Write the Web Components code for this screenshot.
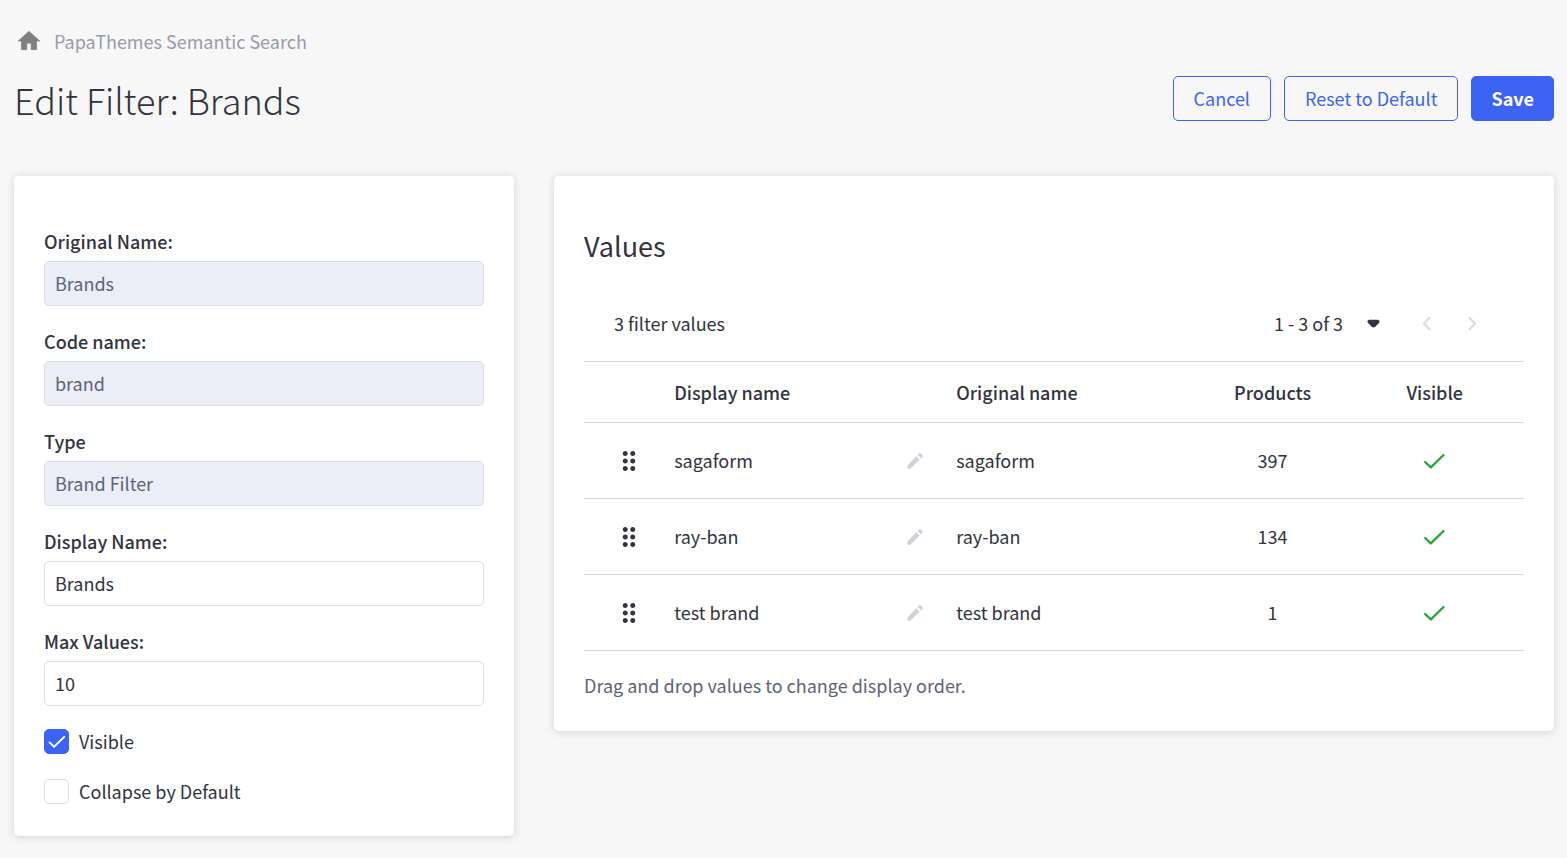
<!DOCTYPE html>
<html lang="en">
<head>
  <meta charset="utf-8">
  <meta name="viewport" content="width=device-width, initial-scale=1">
  <title>Edit Filter: Brands</title>
  <style>
    body {
      margin: 0;
      background-color: #f7f7f7;
      color: #313440;
      font-family: "Source Sans Pro", "Noto Sans CJK SC", "Noto Sans", sans-serif;
      font-size: 18px;
      line-height: 25px;
      --primary: #3c64f4;
      --success: #20a839;
      --border: #d9dce9;
      --muted: #5e637a;
    }
  </style>
</head>
<body>

<filter-page></filter-page>

<script>

  /**
   *
   * AppIcon
   *  - inline icons, colored by the current text color
   *
   */
  class AppIcon extends HTMLElement {

    static version = '0.0.1';

    /**
     * @type {Object<string, string>}
     */
    static paths = {
      home: '<path fill="currentColor" stroke="currentColor" stroke-width=".6" stroke-linejoin="round" d="M10 20v-6h4v6h5v-8h3L12 3 2 12h3v8z"/>',
      drag: '<path fill="currentColor" d="M11 18c0 1.100-.900 2-2 2s-2-.900-2-2 .900-2 2-2 2 .900 2 2zm-2-8c-1.100 0-2 .900-2 2s.900 2 2 2 2-.900 2-2-.900-2-2-2zm0-6c-1.100 0-2 .900-2 2s.900 2 2 2 2-.900 2-2-.900-2-2-2zm6 4c1.100 0 2-.900 2-2s-.900-2-2-2-2 .900-2 2 .900 2 2 2zm0 2c-1.100 0-2 .900-2 2s.900 2 2 2 2-.900 2-2-.900-2-2-2zm0 6c-1.100 0-2 .900-2 2s.900 2 2 2 2-.900 2-2-.900-2-2-2z"/>',
      edit: '<path fill="currentColor" d="M3.600 17.300V20c0 .300.200.500.500.500h2.700c.200 0 .300-.100.400-.200L17 10.500 13.400 6.900 3.700 16.900c-.100.100-.100.200-.100.400zM20.300 7.200c.400-.400.400-1 0-1.400l-2.200-2.200c-.400-.400-1-.400-1.400 0L14.900 5.400 18.500 9z"/>',
      check: '<path fill="none" stroke="currentColor" stroke-width="2.200" stroke-linecap="round" stroke-linejoin="round" d="M3 12.500L8.500 17.700 20.700 5.800"/>',
      down: '<path fill="currentColor" d="M8.700 8.500h6.600c2.300 0 3.300 1.700 1.700 3.300l-3.300 3.200c-.900.900-2.500.900-3.400 0L7 11.800C5.400 10.200 6.400 8.500 8.700 8.500z"/>',
      previous: '<path fill="none" stroke="currentColor" stroke-width="2" stroke-linecap="round" stroke-linejoin="round" d="M15 6.500L9.500 12l5.500 5.500"/>',
      next: '<path fill="none" stroke="currentColor" stroke-width="2" stroke-linecap="round" stroke-linejoin="round" d="M10 6.500L15.500 12l-5.500 5.500"/>'
    };

    connectedCallback() {
      const shadowRoot = this.attachShadow({mode: 'open'});
      shadowRoot.innerHTML = `
        <style>
          :host{
            display: inline-flex;
            width: 25px;
            height: 25px;
          }
          svg{
            width: 100%;
            height: 100%;
          }
        </style>
        <svg viewBox="0 0 24 24" aria-hidden="true">${ AppIcon.paths[this.getAttribute('name')] }</svg>
      `;
    }

  }

  customElements.define('app-icon', AppIcon);

  /**
   *
   * AppButton
   *  - outlined button, or filled with the primary attribute
   *
   */
  class AppButton extends HTMLElement {

    connectedCallback() {
      const shadowRoot = this.attachShadow({mode: 'open'});
      shadowRoot.innerHTML = `
        <style>
          :host{
            display: block;
          }
          button{
            box-sizing: border-box;
            height: 45px;
            padding: 0 20px;
            border: solid 1px var(--primary);
            border-radius: 5px;
            background-color: transparent;
            color: var(--primary);
            font: inherit;
            white-space: nowrap;
            cursor: pointer;
          }
          :host([primary]) button{
            padding: 0 19px;
            background-color: var(--primary);
            color: #ffffff;
            font-weight: 700;
          }
        </style>
        <button type="button"><slot></slot></button>
      `;
    }

  }

  customElements.define('app-button', AppButton);

  /**
   *
   * AppPanel
   *  - white card
   *
   */
  class AppPanel extends HTMLElement {

    connectedCallback() {
      const shadowRoot = this.attachShadow({mode: 'open'});
      shadowRoot.innerHTML = `
        <style>
          :host{
            display: block;
            padding: 53px 30px 32px;
            border-radius: 5px;
            background-color: #ffffff;
            box-shadow: 0 1px 8px rgba(49, 52, 64, 0.18);
          }
        </style>
        <slot></slot>
      `;
    }

  }

  customElements.define('app-panel', AppPanel);

  /**
   *
   * TextField
   *  - label and text input
   *
   */
  class TextField extends HTMLElement {

    connectedCallback() {
      const shadowRoot = this.attachShadow({mode: 'open'});
      shadowRoot.innerHTML = `
        <style>
          :host{
            display: flex;
            flex-direction: column;
            gap: 7px;
          }
          label{
            font-weight: 500;
          }
          input{
            box-sizing: border-box;
            width: 100%;
            height: 45px;
            padding: 0 10px 2px;
            border: solid 1px var(--border);
            border-radius: 5px;
            background-color: #ffffff;
            color: inherit;
            font: inherit;
          }
          input:disabled{
            background-color: #ebeef7;
            color: var(--muted);
          }
        </style>
        <label for="field">${ this.getAttribute('label') }</label>
        <input id="field" type="text" value="${ this.getAttribute('value') }">
      `;
      shadowRoot.querySelector('input').toggleAttribute('disabled', this.hasAttribute('disabled'));
    }

  }

  customElements.define('text-field', TextField);

  /**
   *
   * CheckField
   *  - checkbox and label
   *
   */
  class CheckField extends HTMLElement {

    connectedCallback() {
      const shadowRoot = this.attachShadow({mode: 'open'});
      shadowRoot.innerHTML = `
        <style>
          :host{
            display: flex;
            align-items: center;
            gap: 10px;
          }
          .box{
            display: grid;
            place-items: center;
          }
          .box > *{
            grid-area: 1 / 1;
          }
          input{
            appearance: none;
            box-sizing: border-box;
            width: 25px;
            height: 25px;
            margin: 0;
            border: solid 1px var(--border);
            border-radius: 5px;
            background-color: #ffffff;
          }
          input:checked{
            border-color: var(--primary);
            background-color: var(--primary);
          }
          app-icon{
            width: 20px;
            height: 20px;
            color: #ffffff;
            pointer-events: none;
          }
          input:not(:checked) + app-icon{
            visibility: hidden;
          }
        </style>
        <span class="box">
          <input id="field" type="checkbox">
          <app-icon name="check"></app-icon>
        </span>
        <label for="field"><slot></slot></label>
      `;
      shadowRoot.querySelector('input').checked = this.hasAttribute('checked');
    }

  }

  customElements.define('check-field', CheckField);

  /**
   *
   * ValuesPager
   *  - range select and previous/next buttons
   *
   */
  class ValuesPager extends HTMLElement {

    connectedCallback() {
      const shadowRoot = this.attachShadow({mode: 'open'});
      shadowRoot.innerHTML = `
        <style>
          :host{
            display: flex;
            align-items: center;
            gap: 20px;
          }
          .range{
            display: grid;
            align-items: center;
            margin-right: 8px;
          }
          .range > *{
            grid-area: 1 / 1;
          }
          select{
            appearance: none;
            height: 45px;
            padding: 0 42px 0 0;
            border: none;
            background-color: transparent;
            color: inherit;
            font: inherit;
          }
          .range app-icon{
            justify-self: end;
            pointer-events: none;
          }
          button{
            display: flex;
            padding: 0;
            border: none;
            background-color: transparent;
            color: var(--border);
          }
        </style>
        <span class="range">
          <select aria-label="Range">
            <option>1 - 3 of 3</option>
          </select>
          <app-icon name="down"></app-icon>
        </span>
        <button type="button" aria-label="Previous" disabled><app-icon name="previous"></app-icon></button>
        <button type="button" aria-label="Next" disabled><app-icon name="next"></app-icon></button>
      `;
    }

  }

  customElements.define('values-pager', ValuesPager);

  /**
   *
   * ValuesTable
   *  - table of filter values
   *
   */
  class ValuesTable extends HTMLElement {

    /**
     * @type {{display: string, original: string, products: number}[]}
     */
    values = [
      {display: 'sagaform', original: 'sagaform', products: 397},
      {display: 'ray-ban', original: 'ray-ban', products: 134},
      {display: 'test brand', original: 'test brand', products: 1}
    ];

    connectedCallback() {
      const shadowRoot = this.attachShadow({mode: 'open'});
      shadowRoot.innerHTML = `
        <style>
          :host{
            display: block;
          }
          .toolbar{
            display: flex;
            justify-content: space-between;
            align-items: center;
            height: 75px;
            padding: 0 40px 0 30px;
          }
          table{
            width: 100%;
            table-layout: fixed;
            border-collapse: collapse;
            border-top: solid 1px #d5d6dc;
          }
          tr{
            border-bottom: solid 1px #d5d6dc;
          }
          th, td{
            box-sizing: border-box;
            height: 76px;
            padding: 0 15px;
            text-align: left;
          }
          th{
            height: 61px;
            font-weight: 500;
          }
          .handle{
            width: 8%;
          }
          .display{
            width: 30%;
          }
          .products{
            width: 15.5%;
            text-align: center;
          }
          .visible{
            width: 19%;
            text-align: center;
          }
          .name{
            display: flex;
            justify-content: space-between;
            align-items: center;
          }
          button{
            display: flex;
            padding: 0;
            border: none;
            background-color: transparent;
            color: inherit;
          }
          td.handle button{
            margin-left: auto;
            cursor: grab;
          }
          td.handle app-icon{
            width: 30px;
            height: 30px;
          }
          .name button{
            color: #cfd1db;
            cursor: pointer;
          }
          .name app-icon{
            width: 22px;
            height: 22px;
          }
          td.visible app-icon{
            color: var(--success);
            vertical-align: middle;
          }
        </style>
        <div class="toolbar">
          <span>${ this.values.length } filter values</span>
          <values-pager></values-pager>
        </div>
        <table>
          <thead>
            <tr>
              <th class="handle"></th>
              <th class="display">Display name</th>
              <th>Original name</th>
              <th class="products">Products</th>
              <th class="visible">Visible</th>
            </tr>
          </thead>
          <tbody>${ this.values.map(value => this.renderRow(value)).join('') }</tbody>
        </table>
      `;
    }

    /**
     *
     * @param {string} display
     * @param {string} original
     * @param {number} products
     * @returns {string}
     */
    renderRow({display, original, products}) {
      return `
        <tr>
          <td class="handle"><button type="button" aria-label="Move"><app-icon name="drag"></app-icon></button></td>
          <td>
            <div class="name">
              <span>${ display }</span>
              <button type="button" aria-label="Edit"><app-icon name="edit"></app-icon></button>
            </div>
          </td>
          <td>${ original }</td>
          <td class="products">${ products }</td>
          <td class="visible"><app-icon name="check"></app-icon></td>
        </tr>
      `;
    }

  }

  customElements.define('values-table', ValuesTable);

  /**
   *
   * FilterPage
   *  - breadcrumb, title, actions, filter settings and values
   *
   */
  class FilterPage extends HTMLElement {

    connectedCallback() {
      const shadowRoot = this.attachShadow({mode: 'open'});
      shadowRoot.innerHTML = `
        <style>
          :host{
            display: block;
            padding: 28px 13px 22px 14px;
          }
          nav{
            display: flex;
            align-items: center;
            gap: 10px;
            color: #979bad;
          }
          nav a{
            display: flex;
            color: #808080;
          }
          nav app-icon{
            width: 30px;
            height: 26px;
          }
          header{
            display: flex;
            justify-content: space-between;
            align-items: center;
            height: 50px;
            margin: 19px 0 53px;
          }
          h1{
            margin: 0;
            padding-top: 2px;
            font-size: 36px;
            font-weight: 200;
            line-height: 50px;
          }
          .actions{
            display: flex;
            gap: 13px;
          }
          main{
            display: grid;
            grid-template-columns: 1fr 2fr;
            align-items: start;
            gap: 40px;
          }
          form{
            display: flex;
            flex-direction: column;
            gap: 23px;
          }
          .options{
            display: flex;
            flex-direction: column;
            gap: 25px;
          }
          h2{
            margin: 0 0 23px;
            font-size: 27px;
            font-weight: 400;
            line-height: 34px;
          }
          .hint{
            margin: 22px 0 1px;
            color: var(--muted);
          }
        </style>
        <nav>
          <a href="#" aria-label="Home"><app-icon name="home"></app-icon></a>
          <span>PapaThemes Semantic Search</span>
        </nav>
        <header>
          <h1>Edit Filter: Brands</h1>
          <div class="actions">
            <app-button>Cancel</app-button>
            <app-button>Reset to Default</app-button>
            <app-button primary>Save</app-button>
          </div>
        </header>
        <main>
          <app-panel>
            <form>
              <text-field label="Original Name:" value="Brands" disabled></text-field>
              <text-field label="Code name:" value="brand" disabled></text-field>
              <text-field label="Type" value="Brand Filter" disabled></text-field>
              <text-field label="Display Name:" value="Brands"></text-field>
              <text-field label="Max Values:" value="10"></text-field>
              <div class="options">
                <check-field checked>Visible</check-field>
                <check-field>Collapse by Default</check-field>
              </div>
            </form>
          </app-panel>
          <app-panel>
            <h2>Values</h2>
            <values-table></values-table>
            <p class="hint">Drag and drop values to change display order.</p>
          </app-panel>
        </main>
      `;
    }

  }

  customElements.define('filter-page', FilterPage);

</script>
</body>
</html>
